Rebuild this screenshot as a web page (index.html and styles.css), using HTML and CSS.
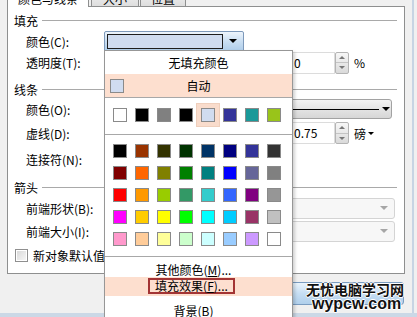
FILE: index.html
```html
<!DOCTYPE html>
<html lang="zh-CN">
<head>
    <meta charset="UTF-8">
    <meta name="viewport" content="width=device-width, initial-scale=1.0">
    <title>设置自选图形格式</title>
<link rel="stylesheet" href="styles.css">
</head>
<body>
    <div class="window">
        <div class="dialog">
            <div class="tabs">
                <div class="tab active">颜色与线条</div>
                <div class="tab tab-size">大小</div>
                <div class="tab tab-pos">位置</div>
            </div>
            <div class="panel">
                <div class="legend legend-fill"><span>填充</span></div>
                <div class="row row-color">
                    <span class="label">颜色(C):</span>
                    <div class="picker"><span class="picker-value"></span><span class="picker-arrow"></span></div>
                </div>
                <div class="row row-alpha">
                    <span class="label">透明度(T):</span>
                    <div class="slot"></div>
                    <div class="field">0</div>
                    <div class="spinner"><span class="up"></span><span class="down"></span></div>
                    <span class="unit">%</span>
                </div>
                <div class="legend legend-line"><span>线条</span></div>
                <div class="row row-linecolor">
                    <span class="label">颜色(O):</span>
                    <div class="line-select"><span class="stroke"></span><span class="arrow"></span></div>
                </div>
                <div class="row row-dash">
                    <span class="label">虚线(D):</span>
                    <div class="slot"></div>
                    <div class="field">0.75</div>
                    <div class="spinner"><span class="up"></span><span class="down"></span></div>
                    <span class="unit">磅<span class="caret"></span></span>
                </div>
                <div class="row row-join">
                    <span class="label">连接符(N):</span>
                </div>
                <div class="legend legend-arrow"><span>箭头</span></div>
                <div class="row row-begin">
                    <span class="label">前端形状(B):</span>
                    <div class="slot slot-wide"></div>
                    <div class="select disabled"><span class="arrow"></span></div>
                </div>
                <div class="row row-end">
                    <span class="label">前端大小(I):</span>
                    <div class="slot slot-wide"></div>
                    <div class="select disabled"><span class="arrow"></span></div>
                </div>
                <div class="row row-default">
                    <span class="check"></span>
                    <span>新对象默认值</span>
                </div>
            </div>
            <div class="footer">
                <button class="btn" type="button"></button>
            </div>
        </div>
        <div class="edge"></div>
    </div>

    <!-- color drop-down, open over the dialog -->
    <div class="menu">
        <div class="menu-item">无填充颜色</div>
        <div class="menu-auto">
            <span class="swatch" style="background:#d0dcf0"></span>
            <span class="auto-label">自动</span>
        </div>
        <div class="sep"></div>
        <div class="swatch-row">
            <span class="swatch" style="background:#ffffff"></span>
            <span class="swatch" style="background:#000000"></span>
            <span class="swatch" style="background:#808080"></span>
            <span class="swatch" style="background:#000000"></span>
            <span class="swatch selected" style="background:#d0dcf0"></span>
            <span class="swatch" style="background:#333399"></span>
            <span class="swatch" style="background:#1a9999"></span>
            <span class="swatch" style="background:#99c41a"></span>
        </div>
        <div class="sep"></div>
        <div class="swatch-grid">
            <span class="swatch" style="background:#000000"></span>
            <span class="swatch" style="background:#993300"></span>
            <span class="swatch" style="background:#333300"></span>
            <span class="swatch" style="background:#003300"></span>
            <span class="swatch" style="background:#003366"></span>
            <span class="swatch" style="background:#000080"></span>
            <span class="swatch" style="background:#333399"></span>
            <span class="swatch" style="background:#333333"></span>

            <span class="swatch" style="background:#800000"></span>
            <span class="swatch" style="background:#ff6600"></span>
            <span class="swatch" style="background:#808000"></span>
            <span class="swatch" style="background:#008000"></span>
            <span class="swatch" style="background:#008080"></span>
            <span class="swatch" style="background:#0000ff"></span>
            <span class="swatch" style="background:#666699"></span>
            <span class="swatch" style="background:#808080"></span>

            <span class="swatch" style="background:#ff0000"></span>
            <span class="swatch" style="background:#ff9900"></span>
            <span class="swatch" style="background:#99cc00"></span>
            <span class="swatch" style="background:#339966"></span>
            <span class="swatch" style="background:#33cccc"></span>
            <span class="swatch" style="background:#3366ff"></span>
            <span class="swatch" style="background:#800080"></span>
            <span class="swatch" style="background:#969696"></span>

            <span class="swatch" style="background:#ff00ff"></span>
            <span class="swatch" style="background:#ffcc00"></span>
            <span class="swatch" style="background:#ffff00"></span>
            <span class="swatch" style="background:#00ff00"></span>
            <span class="swatch" style="background:#00ffff"></span>
            <span class="swatch" style="background:#00ccff"></span>
            <span class="swatch" style="background:#993366"></span>
            <span class="swatch" style="background:#c0c0c0"></span>

            <span class="swatch" style="background:#ff99cc"></span>
            <span class="swatch" style="background:#ffcc99"></span>
            <span class="swatch" style="background:#ffff99"></span>
            <span class="swatch" style="background:#ccffcc"></span>
            <span class="swatch" style="background:#ccffff"></span>
            <span class="swatch" style="background:#99ccff"></span>
            <span class="swatch" style="background:#cc99ff"></span>
            <span class="swatch" style="background:#ffffff"></span>
        </div>
        <div class="sep"></div>
        <div class="menu-cmd">其他颜色(<u>M</u>)...</div>
        <div class="menu-cmd hot"><span class="focus">填充效果(<u>F</u>)...</span></div>
        <div class="menu-cmd last">背景(<u>B</u>)</div>
    </div>

    <div class="watermark">
        <div class="wm-name">无忧电脑学习网</div>
        <div class="wm-site">wypcw.com</div>
    </div>
</body>

</html>
```

FILE: styles.css
```css
body {
    margin: 0;
    width: 417px;
    height: 317px;
    overflow: hidden;
    position: relative;
    background-color: #f0f0f0;
    color: #000;
    font-family: "Noto Sans CJK SC", "Liberation Sans", sans-serif;
    font-size: 12px;
}

.window {
    display: flex;
    height: 317px;
    box-sizing: border-box;
    border-bottom: 4px solid #cbd8e6;
    overflow: hidden;
}

.dialog {
    margin-left: 7px;
    width: 398px;
}

.edge {
    width: 2px;
    margin-left: 7px;
    background-color: #c7d4e3;
}

/* tab strip, mostly scrolled off the top */
.tabs {
    display: flex;
    align-items: flex-start;
    height: 18px;
    margin-top: -12px;
}

.tab {
    box-sizing: border-box;
    height: 18px;
    padding-top: 2px;
    line-height: 16px;
    text-align: center;
    border: 1px solid #8e8f8f;
    border-bottom: none;
    background: linear-gradient(#f4f4f4, #dedede);
}

.tab.active {
    position: relative;
    z-index: 1;
    width: 82px;
    height: 19px;
    background: #fff;
}

.tab-size {
    width: 48px;
    margin-left: 2px;
}

.tab-pos {
    width: 46px;
    margin-left: 1px;
}

.panel {
    box-sizing: border-box;
    height: 268px;
    padding-top: 3px;
    background-color: #fff;
    border: 1px solid #8e8f8f;
}

/* group headers with etched rule */
.legend {
    display: flex;
    align-items: center;
    height: 21px;
    padding: 0 7px 0 6px;
}

.legend::after {
    content: '';
    flex: 1;
    height: 1px;
    margin-left: 4px;
    background-color: #a9a9a9;
}

.legend-line {
    height: 20px;
    margin-top: 5px;
}

.legend-arrow {
    height: 19px;
    margin-top: 6px;
}

.row {
    display: flex;
    align-items: center;
    height: 20px;
    padding-left: 18px;
}

.row-alpha { height: 23px; }
.row-dash { height: 28px; }
.row-join { height: 25px; }
.row-begin { height: 22px; }
.row-end { height: 24px; }

.row-default {
    height: 25px;
    padding-left: 7px;
}

.label {
    flex-shrink: 0;
    width: 78px;
}

.slot {
    flex-shrink: 0;
    width: 182px;
}

.slot-wide {
    width: 166px;
}

/* fill colour picker */
.picker {
    display: flex;
    align-items: center;
    box-sizing: border-box;
    width: 140px;
    height: 21px;
    padding-left: 2px;
    border: 1px solid #7d99ba;
    border-radius: 2px;
    background: linear-gradient(#eef5fc, #c9def2 50%, #aecdea);
}

.picker-value {
    box-sizing: border-box;
    width: 116px;
    height: 15px;
    border: 1px solid #1e1e1e;
    background-color: #cfdcf0;
}

.picker-arrow {
    flex: 1;
    display: flex;
    justify-content: center;
}

.picker-arrow::before {
    content: '';
    border-left: 4px solid transparent;
    border-right: 4px solid transparent;
    border-top: 4px solid #000;
}

.field {
    box-sizing: border-box;
    width: 49px;
    height: 22px;
    padding-left: 7px;
    line-height: 20px;
    border: 1px solid #dcdcdc;
}

.spinner {
    display: flex;
    flex-direction: column;
    box-sizing: border-box;
    width: 14px;
    height: 22px;
    border: 1px solid #b4b4b4;
    border-radius: 2px;
    background: linear-gradient(#f7f7f7, #dadada);
}

.spinner span {
    flex: 1;
    display: flex;
    align-items: center;
    justify-content: center;
}

.spinner .up {
    border-bottom: 1px solid #c4c4c4;
}

.spinner .up::before {
    content: '';
    border-left: 3px solid transparent;
    border-right: 3px solid transparent;
    border-bottom: 3px solid #777;
}

.spinner .down::before {
    content: '';
    border-left: 3px solid transparent;
    border-right: 3px solid transparent;
    border-top: 3px solid #777;
}

.unit {
    display: flex;
    align-items: center;
    margin-left: 5px;
}

.caret {
    margin-left: 2px;
    border-left: 3px solid transparent;
    border-right: 3px solid transparent;
    border-top: 3px solid #000;
}

/* line colour / style drop-down */
.line-select {
    display: flex;
    align-items: center;
    box-sizing: border-box;
    width: 288px;
    height: 20px;
    padding-left: 4px;
    border: 1px solid #a2a2a2;
    border-radius: 3px;
    background: linear-gradient(#f2f2f2, #d6d6d6);
}

.line-select .stroke {
    flex: 1;
    height: 1px;
    background-color: #000;
}

.line-select .arrow {
    margin: 0 1px 0 3px;
    border-left: 4px solid transparent;
    border-right: 4px solid transparent;
    border-top: 4px solid #000;
}

.select {
    display: flex;
    align-items: center;
    justify-content: flex-end;
    box-sizing: border-box;
    width: 125px;
    height: 21px;
    border: 1px solid #d4d4d4;
    border-radius: 3px;
    background-color: #f7f7f7;
}

.select .arrow {
    margin-right: 6px;
    border-left: 4px solid transparent;
    border-right: 4px solid transparent;
    border-top: 4px solid #a6a6a6;
}

.check {
    box-sizing: border-box;
    width: 13px;
    height: 13px;
    margin-right: 5px;
    border: 1px solid #8f8f8f;
    background: linear-gradient(135deg, #d6d6d6, #f8f8f8);
    box-shadow: inset 0 0 0 1px #fff;
}

.footer {
    display: flex;
    justify-content: flex-end;
    padding-top: 8px;
}

.btn {
    width: 150px;
    height: 23px;
    margin-right: 1px;
    border: 1px solid #7a9cc0;
    border-radius: 3px;
    background: linear-gradient(#eaf4fc, #c6def3 50%, #b0cfeb);
}

/* popup colour menu */
.menu {
    position: absolute;
    left: 104px;
    top: 50px;
    z-index: 2;
    box-sizing: border-box;
    width: 189px;
    height: 280px;
    background-color: #fff;
    border: 1px solid #979797;
    box-shadow: 2px 2px 3px rgba(0, 0, 0, 0.18);
}

.menu-item {
    height: 23px;
    line-height: 23px;
    text-align: center;
}

.menu-auto {
    display: flex;
    align-items: center;
    height: 23px;
    padding-left: 5px;
    background-color: #fddfcf;
}

.auto-label {
    flex: 1;
    margin-right: 19px;
    text-align: center;
}

.sep {
    height: 1px;
    background-color: #a8a8a8;
}

.swatch {
    display: block;
    box-sizing: border-box;
    width: 14px;
    height: 14px;
    border: 1px solid #8a8a8a;
}

.swatch-row {
    display: flex;
    gap: 8px;
    padding: 10px 0 12px 8px;
}

.swatch.selected {
    box-shadow: 0 0 0 4px #f9dccc, 0 0 0 5px #efcfbc;
}

.swatch-grid {
    display: grid;
    grid-template-columns: repeat(8, 14px);
    gap: 8px;
    padding: 9px 0 10px 8px;
}

.menu-cmd {
    box-sizing: border-box;
    height: 20px;
    padding: 5px 10px 0 0;
    line-height: 16px;
    text-align: center;
}

.menu-cmd.hot {
    display: flex;
    justify-content: center;
    height: 19px;
    padding: 1px 14px 0 0;
    background-color: #fddfcf;
}

.menu-cmd.last {
    height: 30px;
    padding-top: 7px;
}

.focus {
    box-sizing: border-box;
    height: 16px;
    padding: 0 5px;
    line-height: 12px;
    border: 2px solid #a33434;
}

/* site watermark over the corner */
.watermark {
    position: absolute;
    left: 306px;
    top: 282px;
    z-index: 3;
    color: #111;
    font-weight: bold;
    text-shadow: 1px 0 #fff, -1px 0 #fff, 0 1px #fff, 0 -1px #fff;
}

.wm-name {
    font-size: 14px;
    line-height: 15px;
}

.wm-site {
    margin-left: 6px;
    font-family: "Liberation Sans", sans-serif;
    font-size: 16px;
    line-height: 13px;
}
```
